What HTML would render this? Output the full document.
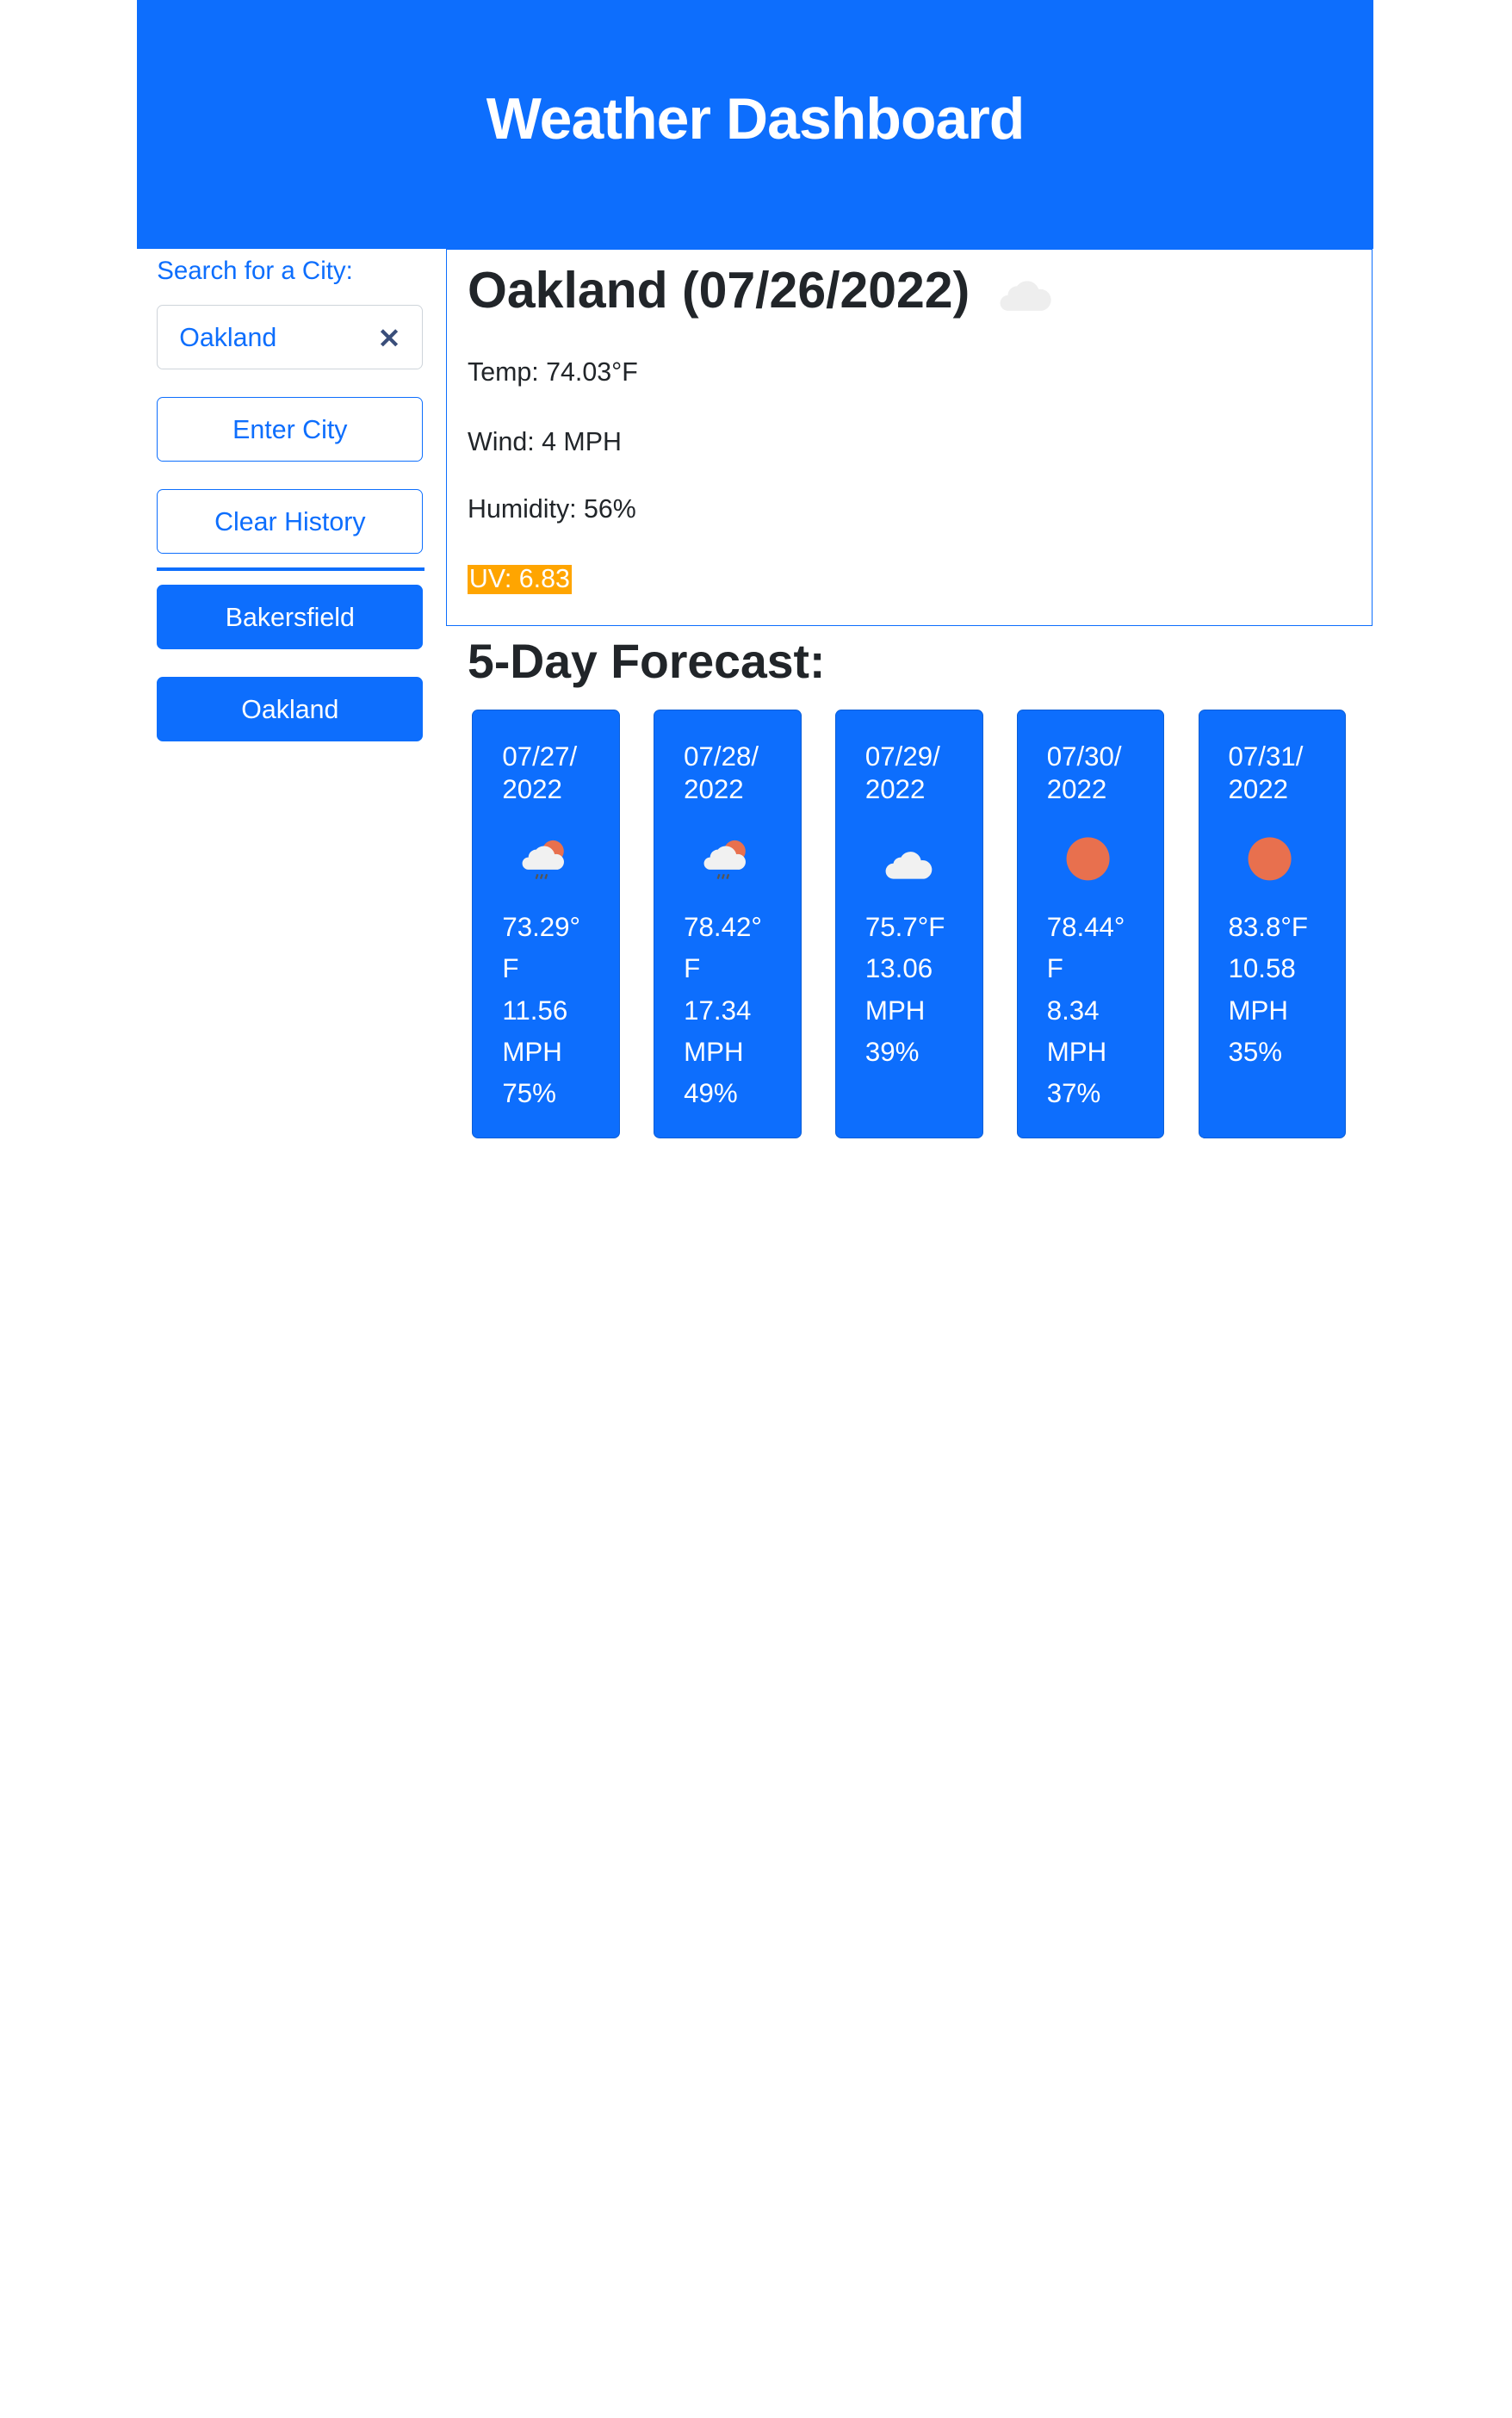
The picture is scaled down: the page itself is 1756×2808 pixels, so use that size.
<!DOCTYPE html>
<html><head><meta charset="utf-8"><style>
html{zoom:1.78637}
body{margin:0;width:983px;height:1572px;background:#fff;font-family:"Liberation Sans",Arial,sans-serif;position:relative;overflow:hidden}
.a{position:absolute}
.hdr{left:89px;top:0;width:804px;height:162px;background:#0d6efd;color:#fff;font-size:38px;font-weight:bold;text-align:center;line-height:156px;letter-spacing:-0.5px}
.lbl{left:102px;top:167px;font-size:16.5px;color:#0d6efd}
.inp{left:102px;top:198px;width:172px;height:41px;border:1px solid #ced4da;border-radius:4px;color:#0d6efd;font-size:17px;line-height:43px}
.btn{left:102px;width:172px;height:41px;border:1px solid #0d6efd;border-radius:4px;color:#0d6efd;font-size:17px;line-height:43px;text-align:center}
.fill{background:#0d6efd;color:#fff}
.main{left:290px;top:162px;width:601px;height:244px;border:1px solid #0d6efd}
.t{color:#212529;font-size:17px}
.card{width:95px;height:278px;top:461px;background:#0d6efd;border:1px solid #0b5ed7;border-radius:4px;color:#fff;font-size:17.5px}
.card .d{position:absolute;left:19px;top:20px;line-height:21px;font-weight:normal}
.card svg{position:absolute;left:30px;top:80px}
</style></head><body>
<div class="a hdr">Weather Dashboard</div>
<div class="a lbl">Search for a City:</div>
<div class="a inp"><span style="position:absolute;left:14px">Oakland</span><span style="position:absolute;left:143px;color:#3a4e7a;font-weight:bold;font-size:18px">✕</span></div>
<div class="a btn" style="top:258px">Enter City</div>
<div class="a btn" style="top:318px">Clear History</div>
<div class="a" style="left:102px;top:369px;width:174px;height:2px;background:#0d6efd"></div>
<div class="a btn fill" style="top:380px">Bakersfield</div>
<div class="a btn fill" style="top:440px">Oakland</div>
<div class="a main"></div>
<div class="a" style="left:304px;top:170px;font-size:33px;color:#212529;font-weight:bold;letter-spacing:0px">Oakland (07/26/2022)</div>
<svg class="a" style="left:648px;top:178px" width="36" height="26" viewBox="0 0 36 26"><path d="M7 24a5 5 0 0 1 0-10 6 6 0 0 1 6-6 8 8 0 0 1 14 2 6 6 0 0 1 2 14z" fill="#eeeeee"/></svg>
<div class="a t" style="left:304px;top:233px">Temp: 74.03°F</div>
<div class="a t" style="left:304px;top:278px">Wind: 4 MPH</div>
<div class="a t" style="left:304px;top:322px">Humidity: 56%</div>
<div class="a t" style="left:304px;top:367px;background:#ffa500;color:#fff;padding:0 1px">UV: 6.83</div>
<div class="a" style="left:304px;top:412px;font-size:31px;color:#212529;font-weight:bold;letter-spacing:0px">5-Day Forecast:</div>

<div class="a card" style="left:307px"><div class="d">07/27/<br>2022</div>
<svg width="36" height="36" viewBox="0 0 36 36"><circle cx="22" cy="12" r="7" fill="#e8704e"/><path d="M6 24a4 4 0 0 1 0-8 5 5 0 0 1 5-5 7 7 0 0 1 12 3 5 5 0 0 1 2 10z" fill="#f1f1f1"/><path d="M12 27l-1 3M15 27l-1 3M18 27l-1 3" stroke="#555" stroke-width="1.3"/></svg>
<div class="d" style="top:128px;line-height:27px">73.29°<br>F<br>11.56<br>MPH<br>75%</div></div>

<div class="a card" style="left:425px"><div class="d">07/28/<br>2022</div>
<svg width="36" height="36" viewBox="0 0 36 36"><circle cx="22" cy="12" r="7" fill="#e8704e"/><path d="M6 24a4 4 0 0 1 0-8 5 5 0 0 1 5-5 7 7 0 0 1 12 3 5 5 0 0 1 2 10z" fill="#f1f1f1"/><path d="M12 27l-1 3M15 27l-1 3M18 27l-1 3" stroke="#555" stroke-width="1.3"/></svg>
<div class="d" style="top:128px;line-height:27px">78.42°<br>F<br>17.34<br>MPH<br>49%</div></div>

<div class="a card" style="left:543px"><div class="d">07/29/<br>2022</div>
<svg width="36" height="36" viewBox="0 0 36 36"><path d="M7 30a5 5 0 0 1 0-10 5 5 0 0 1 5-4 7 7 0 0 1 13 2 5 5 0 0 1 2 12z" fill="#f1f1f1"/></svg>
<div class="d" style="top:128px;line-height:27px">75.7°F<br>13.06<br>MPH<br>39%</div></div>

<div class="a card" style="left:661px"><div class="d">07/30/<br>2022</div>
<svg width="36" height="36" viewBox="0 0 36 36"><circle cx="16" cy="17" r="14" fill="#e8704e"/></svg>
<div class="d" style="top:128px;line-height:27px">78.44°<br>F<br>8.34<br>MPH<br>37%</div></div>

<div class="a card" style="left:779px"><div class="d">07/31/<br>2022</div>
<svg width="36" height="36" viewBox="0 0 36 36"><circle cx="16" cy="17" r="14" fill="#e8704e"/></svg>
<div class="d" style="top:128px;line-height:27px">83.8°F<br>10.58<br>MPH<br>35%</div></div>
</body></html>
